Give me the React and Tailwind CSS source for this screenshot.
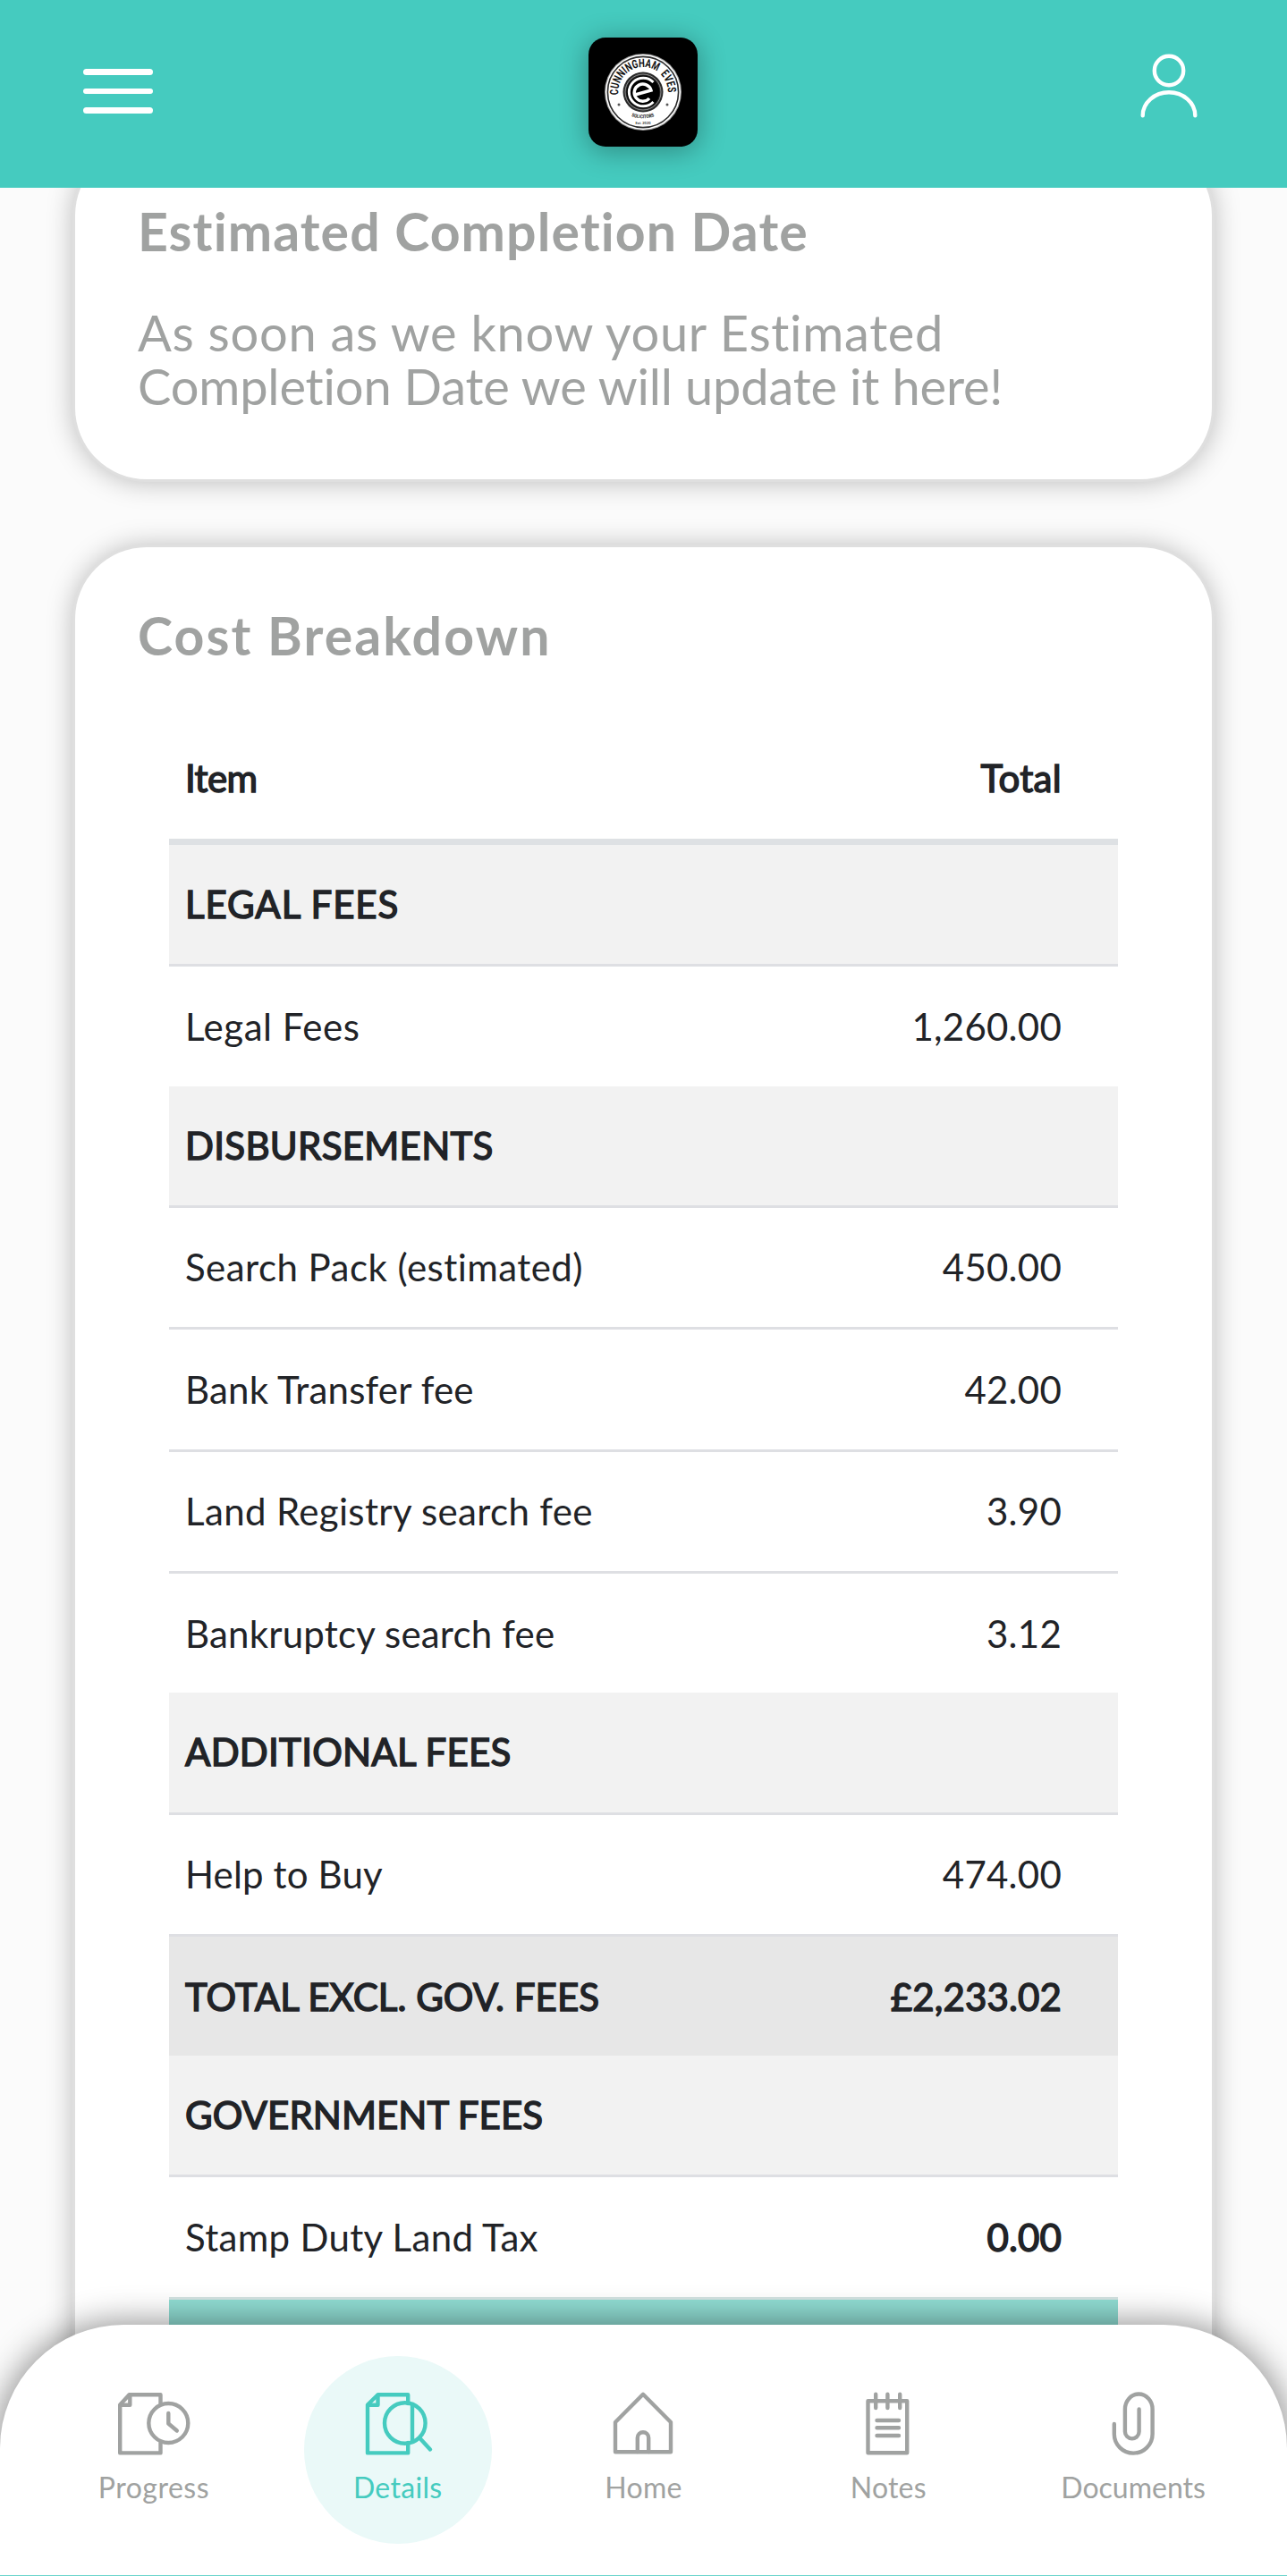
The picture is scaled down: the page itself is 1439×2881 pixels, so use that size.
const ROWS = [
  { kind: 'section', label: 'LEGAL FEES', ls: 'tracking-[0.9px]' },
  { kind: 'row', label: 'Legal Fees', ls: 'tracking-[0.53px]', value: '1,260.00', vls: 'tracking-[0.25px]' },
  { kind: 'section', label: 'DISBURSEMENTS', ls: 'tracking-[0.3px]' },
  { kind: 'row', label: 'Search Pack (estimated)', ls: 'tracking-[0.46px]', value: '450.00', vls: 'tracking-[0.25px]' },
  { kind: 'row', label: 'Bank Transfer fee', ls: 'tracking-[0.2px]', value: '42.00', vls: 'tracking-[0.25px]' },
  { kind: 'row', label: 'Land Registry search fee', ls: 'tracking-[0.35px]', value: '3.90', vls: 'tracking-[0.25px]' },
  { kind: 'row', label: 'Bankruptcy search fee', ls: 'tracking-[0.2px]', value: '3.12', vls: 'tracking-[0.25px]' },
  { kind: 'section', label: 'ADDITIONAL FEES', ls: 'tracking-[0.25px]' },
  { kind: 'row', label: 'Help to Buy', ls: 'tracking-[0.15px]', value: '474.00', vls: 'tracking-[0.25px]' },
  { kind: 'total', label: 'TOTAL EXCL. GOV. FEES', ls: 'tracking-[0.04px]', value: '£2,233.02', vls: 'tracking-[0.15px]' },
  { kind: 'section', label: 'GOVERNMENT FEES', ls: 'tracking-[0.06px]' },
  { kind: 'row', label: 'Stamp Duty Land Tax', ls: 'tracking-[0.32px]', value: '0.00', vls: 'tracking-[0.1px]', boldValue: true },
];

const HEAVY = '[-webkit-text-stroke:1.5px_currentColor]';

function FeeRow({ row }) {
  if (row.kind === 'section') {
    return (
      <div className="flex h-[133.2px] items-center bg-[#f2f2f2] pb-[1px] pl-[18px]">
        <span className={`${HEAVY} ${row.ls}`}>{row.label}</span>
      </div>
    );
  }
  const total = row.kind === 'total';
  return (
    <div
      className={`flex h-[136.4px] items-center justify-between border-t-[3px] border-[#dedfe3] pr-[63px] pl-[18px] ${total ? 'bg-[#e7e7e7]' : ''}`}
    >
      <span className={`${total ? HEAVY : ''} ${row.ls}`}>{row.label}</span>
      <span className={`${total || row.boldValue ? HEAVY : ''} ${row.vls}`}>{row.value}</span>
    </div>
  );
}

function Card({ title, titleClass, className, children }) {
  return (
    <section
      className={`mx-[84px] rounded-[80px] bg-white px-[70px] shadow-[0_0_0_3px_#dfdfdf,0_1px_30px_2px_rgba(0,0,0,0.27)] ${className}`}
    >
      <h2 className={`text-[59px] leading-[72px] font-bold whitespace-nowrap ${titleClass}`}>{title}</h2>
      {children}
    </section>
  );
}

function Icon({ children }) {
  return (
    <svg
      viewBox="0 0 110 80"
      className="h-[80px] w-[110px]"
      fill="none"
      stroke="currentColor"
      strokeWidth="4.4"
      strokeLinecap="round"
      strokeLinejoin="round"
    >
      {children}
    </svg>
  );
}

const NAV = [
  {
    label: 'Progress',
    ls: 'tracking-[0.5px]',
    icon: (
      <Icon>
        <path d="M62.5 18V8.2H27.5L17.2 19.5V73.4H62.5V62" />
        <path d="M28.3 9V19.8H18" />
        <circle cx="71.3" cy="40" r="22" />
        <path d="M71.3 29V40.5L80.8 48.5" />
      </Icon>
    ),
  },
  {
    label: 'Details',
    ls: 'tracking-[0.3px]',
    active: true,
    icon: (
      <Icon>
        <path d="M66.2 18V8.2H32.5L21 19.5V73.4H66.2V62" />
        <path d="M32.5 9V19.8H22" />
        <circle cx="62.8" cy="40" r="22.8" />
        <path d="M71 19.5V60.5" />
        <path d="M79.5 57L91 69.5" />
      </Icon>
    ),
  },
  {
    label: 'Home',
    ls: 'tracking-[0.3px]',
    icon: (
      <Icon>
        <path d="M55 7.8L86 39V72.2H24V39Z" />
        <path d="M48.8 72V56.5A6.2 6.2 0 0 1 61.2 56.5V72" />
      </Icon>
    ),
  },
  {
    label: 'Notes',
    ls: 'tracking-[0.23px]',
    icon: (
      <Icon>
        <path d="M32.5 15.2H76.2V73.2H32.5Z" />
        <path d="M41.2 7.8V23M54.4 7.8V23M68.2 7.8V23" />
        <path d="M42.5 37H67M42.5 45.2H67M42.5 54H67" />
      </Icon>
    ),
  },
  {
    label: 'Documents',
    ls: 'tracking-[0px]',
    icon: (
      <Icon>
        <path d="M33.8 41V52.2A21.4 21.4 0 0 0 76.6 52.2V24.5A15.35 17 0 0 0 45.9 24.5V49.5A7.85 7.85 0 0 0 61.6 49.5V24.5" />
      </Icon>
    ),
  },
];

function Logo() {
  return (
    <div className="h-[122px] w-[122px] overflow-hidden rounded-[19px] bg-black shadow-[0_4px_30px_2px_rgba(0,0,0,0.3)]">
      <svg viewBox="-61 -61 122 122" className="h-full w-full">
        <defs>
          <path id="logo-arc" d="M-27.5 3A27.7 27.7 0 1 1 27.5 3" />
          <path id="logo-base" d="M-13 27Q0 31.5 13 27" />
        </defs>
        <circle r="43" fill="#9a9a9a" />
        <circle r="42" fill="#fff" />
        <circle r="39.6" fill="none" stroke="#2b2b2b" strokeWidth="1.6" />
        <circle r="22.5" fill="#2a2a2a" />
        <circle r="20" fill="none" stroke="#8d8d8d" strokeWidth="1" />
        <circle r="18.5" fill="#000" />
        <path d="M11.5 -11A15.8 15.8 0 1 0 11.5 11" fill="none" stroke="#fff" strokeWidth="3" />
        <path d="M-9 3L9 -2A9.6 9.6 0 1 0 7 7" fill="none" stroke="#fff" strokeWidth="3.4" />
        <g fill="#111" fontFamily="Roboto, sans-serif">
          <text fontSize="13" fontWeight="700">
            <textPath href="#logo-arc" textLength="91" lengthAdjust="spacingAndGlyphs">
              {'CUNNINGHAM\u00a0\u00a0EVES'}
            </textPath>
          </text>
          <text fontSize="5.5" fontWeight="700">
            <textPath href="#logo-base" textLength="26" lengthAdjust="spacingAndGlyphs">
              SOLICITORS
            </textPath>
          </text>
          <text y="35.5" fontSize="4" fontWeight="500" textAnchor="middle">
            Est. 2020
          </text>
        </g>
        <circle cx="-27" cy="14" r="1.5" fill="#555" />
        <circle cx="27" cy="14" r="1.5" fill="#555" />
      </svg>
    </div>
  );
}

export default function App() {
  return (
    <div className="relative flex h-[2881px] w-[1439px] flex-col overflow-hidden bg-[#fbfbfb] font-['Lato',sans-serif] text-[#a0a2a1]">
      <header className="relative z-10 flex h-[210px] shrink-0 items-start justify-between bg-[#45cbbf] pr-[94px] pl-[93px]">
        <div className="mt-[77px] flex w-[122px] flex-col gap-[15px]">
          <span className="h-[6.6px] w-[78px] rounded-full bg-white" />
          <span className="h-[6.6px] w-[78px] rounded-full bg-white" />
          <span className="h-[6.6px] w-[78px] rounded-full bg-white" />
        </div>
        <div className="mt-[42px]">
          <Logo />
        </div>
        <div className="mt-[54px] flex w-[122px] justify-end">
          <svg
            viewBox="-2 0 80 90"
            className="h-[90px] w-[80px]"
            fill="none"
            stroke="#fff"
            strokeWidth="4.4"
            strokeLinecap="round"
          >
            <circle cx="40" cy="25" r="16.2" />
            <path d="M10.7 75.3A29.3 26 0 0 1 69.3 75.3" />
          </svg>
        </div>
      </header>

      <main className="flex flex-col">
        <Card title="Estimated Completion Date" titleClass="tracking-[1.08px]" className="-mt-[49px] h-[374.5px] pt-[62px]">
          <p className="mt-[47px] text-[56px] leading-[60px] whitespace-nowrap">
            <span className="tracking-[0.7px]">As soon as we know your Estimated</span>
            <br />
            <span className="tracking-[-0.17px]">Completion Date we will update it here!</span>
          </p>
        </Card>

        <Card title="Cost Breakdown" titleClass="tracking-[2.1px]" className="mt-[76.5px] h-[2400px] pt-[63px]">
          <div className="mt-[55px] ml-[35px] w-[1061px] text-[42px] leading-[50px] whitespace-nowrap text-[#212327]">
            <div className="flex h-[143px] items-center justify-between border-b-[7px] border-[#dee1e4] pr-[63px] pl-[18px]">
              <span className={`${HEAVY} tracking-[-0.6px]`}>Item</span>
              <span className={`${HEAVY} tracking-[0.3px]`}>Total</span>
            </div>
            {ROWS.map((row) => (
              <FeeRow key={row.label} row={row} />
            ))}
            <div className="h-[136px] border-t-[3px] border-[#d3e3e2] bg-[#90ddd3]" />
          </div>
        </Card>
      </main>

      <nav className="absolute inset-x-0 bottom-0 z-10 flex h-[281px] rounded-t-[138px] border-b border-[#6bd6cc] bg-white px-[35px] shadow-[0_0_36px_4px_rgba(0,0,0,0.42)]">
        {NAV.map((item) => (
          <div key={item.label} className="flex flex-1 items-start justify-center pt-[35px]">
            <div
              className={`flex h-[210px] w-[210px] flex-col items-center rounded-full pt-[35px] ${item.active ? '-ml-[2px] bg-[#eaf9f8] text-[#45cbbf]' : ''}`}
            >
              {item.icon}
              <span className={`mt-[12px] text-[32px] leading-[40px] ${item.ls}`}>{item.label}</span>
            </div>
          </div>
        ))}
      </nav>
    </div>
  );
}
